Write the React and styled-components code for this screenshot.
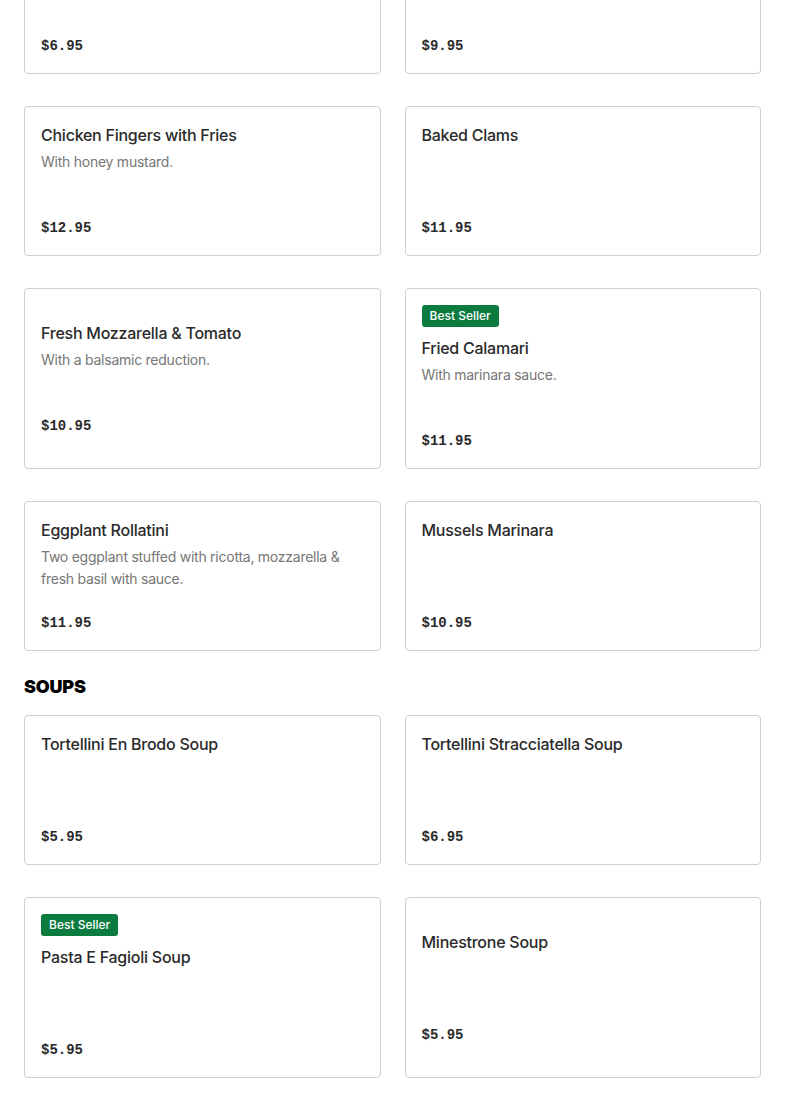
import React from 'react';
import styled, { createGlobalStyle } from 'styled-components';

const GlobalStyle = createGlobalStyle`
    body {
        margin: 0;
        background: #ffffff;
        font-family: Inter, "Noto Sans", sans-serif;
        overflow: hidden;
    }
`;

const Page = styled.main`
    padding: 0 24px;
    margin-top: -76px;
`;

const Section = styled.section`
    & + & {
        margin-top: 24px;
    }
`;

const SectionTitle = styled.h2`
    margin: 0 0 16px;
    font-family: Inter, "Liberation Sans", sans-serif;
    font-weight: 900;
    font-size: 18px;
    line-height: 24px;
    letter-spacing: -0.2px;
    color: #000000;
    text-transform: uppercase;
`;

const Grid = styled.ul`
    list-style: none;
    margin: 0;
    padding: 0;
    display: grid;
    grid-template-columns: 1fr 1fr;
    column-gap: 24px;
    row-gap: 32px;
`;

const Card = styled.li`
    border: 1px solid #cfcfcf;
    border-radius: 4px;
    padding: 16px 16px 15px;
    min-height: 115px;
    display: flex;
    flex-direction: column;
    justify-content: center;
`;

const Badge = styled.span`
    align-self: flex-start;
    background: #0b7b40;
    color: #ffffff;
    border-radius: 3px;
    font-size: 12px;
    font-weight: 500;
    line-height: 22px;
    padding: 0 8px;
    margin-bottom: 9px;
`;

const Title = styled.h3`
    margin: 0;
    font-size: 16px;
    font-weight: 500;
    line-height: 24px;
    letter-spacing: -0.25px;
    color: #2a2a2a;
`;

const Description = styled.p`
    margin: 4px 0 0;
    min-height: 44px;
    font-size: 14px;
    line-height: 22px;
    letter-spacing: -0.25px;
    color: #767676;
`;

const Price = styled.p`
    margin: 21px 0 0;
    font-family: "Liberation Mono", "DejaVu Sans Mono", monospace;
    font-weight: 700;
    font-size: 14px;
    line-height: 24px;
    color: #2a2a2a;
`;

const menu = [
    {
        name: 'Appetizers',
        hidden: true,
        items: [
            { title: 'Garlic Knots', price: '$6.95' },
            { title: 'Mozzarella Sticks', price: '$9.95' },
            { title: 'Chicken Fingers with Fries', description: 'With honey mustard.', price: '$12.95' },
            { title: 'Baked Clams', price: '$11.95' },
            { title: 'Fresh Mozzarella & Tomato', description: 'With a balsamic reduction.', price: '$10.95' },
            { title: 'Fried Calamari', description: 'With marinara sauce.', price: '$11.95', best: true },
            { title: 'Eggplant Rollatini', description: 'Two eggplant stuffed with ricotta, mozzarella & fresh basil with sauce.', price: '$11.95' },
            { title: 'Mussels Marinara', price: '$10.95' },
        ],
    },
    {
        name: 'Soups',
        items: [
            { title: 'Tortellini En Brodo Soup', price: '$5.95' },
            { title: 'Tortellini Stracciatella Soup', price: '$6.95' },
            { title: 'Pasta E Fagioli Soup', price: '$5.95', best: true },
            { title: 'Minestrone Soup', price: '$5.95' },
        ],
    },
    {
        name: 'Salads',
        items: [
            { title: 'House Salad', price: '$7.95' },
            { title: 'Caesar Salad', price: '$8.95' },
        ],
    },
];

const MenuItem = ({ item }) => {
    const { title, description, price, best } = item;
    return (
        <Card>
            {best && <Badge>Best Seller</Badge>}
            <Title>{title}</Title>
            <Description>{description}</Description>
            <Price>{price}</Price>
        </Card>
    );
};

const App = () => {
    return (
        <>
            <GlobalStyle />
            <Page>
                {menu.map((section) => (
                    <Section key={section.name}>
                        {!section.hidden && <SectionTitle>{section.name}</SectionTitle>}
                        <Grid>
                            {section.items.map((item) => (
                                <MenuItem key={item.title} item={item} />
                            ))}
                        </Grid>
                    </Section>
                ))}
            </Page>
        </>
    );
};

export default App;
